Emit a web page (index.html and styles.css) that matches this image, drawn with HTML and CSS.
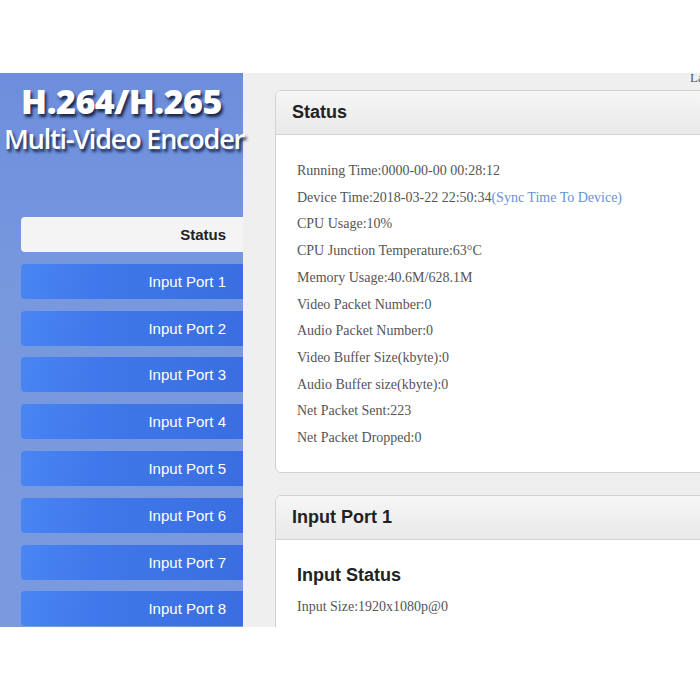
FILE: index.html
```html
<!DOCTYPE html>
<html>
<head>
<meta charset="utf-8">
<link rel="stylesheet" href="styles.css">
</head>
<body>
<div class="top-space"></div>
<div class="frame">
  <aside class="sidebar">
    <div class="logo">
      <div class="logo-main">H.264/H.265</div>
      <div class="logo-sub">Multi-Video Encoder</div>
    </div>
    <nav class="menu">
      <div class="item active">Status</div>
      <div class="item">Input Port 1</div>
      <div class="item">Input Port 2</div>
      <div class="item">Input Port 3</div>
      <div class="item">Input Port 4</div>
      <div class="item">Input Port 5</div>
      <div class="item">Input Port 6</div>
      <div class="item">Input Port 7</div>
      <div class="item">Input Port 8</div>
    </nav>
  </aside>
  <main class="main">
    <div class="topbar"><span class="lang">La</span></div>
    <section class="panel">
      <div class="panel-head">Status</div>
      <div class="panel-body">
        <p>Running Time:0000-00-00 00:28:12</p>
        <p>Device Time:2018-03-22 22:50:34<span class="link">(Sync Time To Device)</span></p>
        <p>CPU Usage:10%</p>
        <p>CPU Junction Temperature:63°C</p>
        <p>Memory Usage:40.6M/628.1M</p>
        <p>Video Packet Number:0</p>
        <p>Audio Packet Number:0</p>
        <p>Video Buffer Size(kbyte):0</p>
        <p>Audio Buffer size(kbyte):0</p>
        <p>Net Packet Sent:223</p>
        <p>Net Packet Dropped:0</p>
      </div>
    </section>
    <section class="panel">
      <div class="panel-head">Input Port 1</div>
      <div class="panel-body second">
        <h3 class="sub">Input Status</h3>
        <p>Input Size:1920x1080p@0</p>
      </div>
    </section>
  </main>
</div>
</body>
</html>
```
FILE: styles.css
```css
html, body {
  margin: 0;
  padding: 0;
  background: #ffffff;
}
.top-space {
  height: 73px;
}
.frame {
  width: 700px;
  height: 554px;
  overflow: hidden;
  display: flex;
  background: #efefef;
}
.sidebar {
  width: 243px;
  flex: none;
  background: linear-gradient(180deg, #6d8edc 0%, #7898de 40%, #7a99df 100%);
  display: flex;
  flex-direction: column;
}
.logo {
  height: 144px;
  display: flex;
  flex-direction: column;
  align-items: center;
  color: #ffffff;
  font-family: "Open Sans", "DejaVu Sans", sans-serif;
  text-shadow: 2px 3px 3px rgba(10, 20, 50, 0.85);
  white-space: nowrap;
}
.logo-main {
  font-weight: 800;
  font-size: 34px;
  line-height: 34px;
  margin-top: 11px;
  letter-spacing: -0.5px;
}
.logo-sub {
  font-weight: 600;
  font-size: 27px;
  line-height: 30px;
  margin-top: 6px;
  letter-spacing: -1.2px;
  margin-left: 4px;
  align-self: flex-start;
}
.menu {
  display: flex;
  flex-direction: column;
  gap: 11.8px;
  padding-left: 21px;
}
.item {
  height: 35px;
  line-height: 35px;
  border-radius: 4px 0 0 4px;
  background: linear-gradient(100deg, #4a85f4 0%, #3f78ea 35%, #3a6ee0 100%);
  color: #ffffff;
  font-family: "Liberation Sans", Arial, sans-serif;
  font-size: 15px;
  text-align: right;
  padding-right: 17px;
}
.item.active {
  background: #f4f4f4;
  color: #222222;
  font-weight: bold;
}
.main {
  flex: none;
  width: 460px;
  padding-left: 32px;
}
.topbar {
  height: 17px;
  padding-left: 415px;
  overflow: hidden;
}
.lang {
  display: block;
  margin-top: -4px;
  font-family: "Liberation Serif", serif;
  font-size: 13px;
  line-height: 17px;
  color: #555555;
  white-space: nowrap;
}
.panel {
  background: #ffffff;
  border: 1px solid #d2d2d2;
  border-radius: 6px;
  margin-bottom: 22px;
  width: 460px;
}
.panel-head {
  height: 43px;
  line-height: 43px;
  padding-left: 16px;
  border-bottom: 1px solid #d4d4d4;
  border-radius: 6px 6px 0 0;
  background: linear-gradient(180deg, #f6f6f6 0%, #e9e9e9 100%);
  font-family: "Liberation Sans", Arial, sans-serif;
  font-weight: bold;
  font-size: 18px;
  color: #222222;
}
.panel-body {
  padding: 23px 21px 20px 21px;
  font-family: "Liberation Serif", serif;
  font-size: 14px;
  color: #555555;
}
.panel-body p {
  margin: 0;
  line-height: 26.7px;
}
.link {
  color: #6a8fd8;
}
.panel-body.second {
  padding-top: 23px;
}
.sub {
  margin: 0 0 7px 0;
  font-family: "Liberation Sans", Arial, sans-serif;
  font-weight: bold;
  font-size: 18px;
  line-height: 24px;
  color: #222222;
}
```
